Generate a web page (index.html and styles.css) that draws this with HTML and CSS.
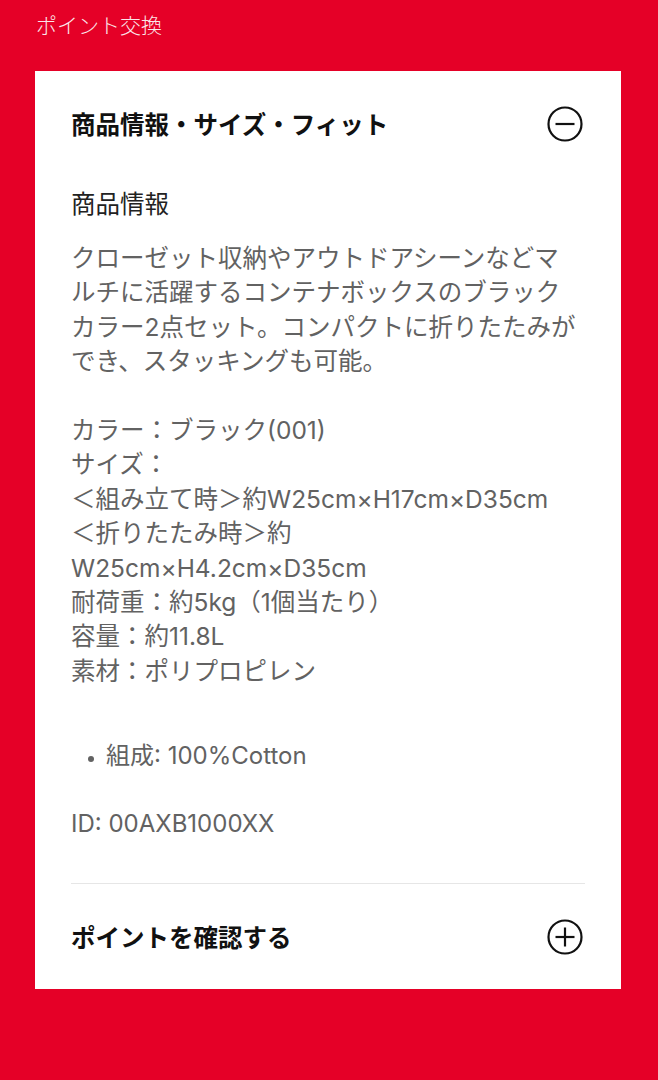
FILE: index.html
```html
<!DOCTYPE html>
<html lang="ja">
<head>
<meta charset="utf-8">
<link rel="stylesheet" href="styles.css">
</head>
<body>
<div class="page">
  <div class="topbar">ポイント交換</div>
  <div class="card">
    <div class="acc-head">
      <h2 class="acc-title">商品情報・サイズ・フィット</h2>
      <svg class="acc-icon" viewBox="0 0 36 36" width="36" height="36"><circle cx="18" cy="18" r="16.5" fill="none" stroke="#111" stroke-width="2.2"/><line x1="8.5" y1="18" x2="27.5" y2="18" stroke="#111" stroke-width="2.2"/></svg>
    </div>
    <div class="acc-body">
      <h3 class="sub">商品情報</h3>
      <p class="desc">クローゼット収納やアウトドアシーンなどマルチに活躍するコンテナボックスのブラックカラー2点セット。コンパクトに折りたたみができ、スタッキングも可能。<br><br>カラー：ブラック(001)<br>サイズ：<br>＜組み立て時＞約W25cm×H17cm×D35cm<br>＜折りたたみ時＞約<br>W25cm×H4.2cm×D35cm<br>耐荷重：約5kg（1個当たり）<br>容量：約11.8L<br>素材：ポリプロピレン</p>
      <ul class="spec">
        <li>組成: 100%Cotton</li>
      </ul>
      <p class="pid">ID: 00AXB1000XX</p>
    </div>
    <div class="acc-head acc-bordered">
      <h2 class="acc-title">ポイントを確認する</h2>
      <svg class="acc-icon" viewBox="0 0 36 36" width="36" height="36"><circle cx="18" cy="18" r="16.5" fill="none" stroke="#111" stroke-width="2.2"/><line x1="8.5" y1="18" x2="27.5" y2="18" stroke="#111" stroke-width="2.2"/><line x1="18" y1="8.5" x2="18" y2="27.5" stroke="#111" stroke-width="2.2"/></svg>
    </div>
  </div>
</div>
</body>
</html>
```

FILE: styles.css
```css
html, body {
  margin: 0;
  padding: 0;
}
body {
  background: #e50027;
  font-family: Inter, "Noto Sans CJK JP", sans-serif;
  width: 658px;
  height: 1080px;
  overflow: hidden;
}
.page {
  padding: 0 37px 0 35px;
}
.topbar {
  color: #fbe6e9;
  font-size: 21px;
  line-height: 52px;
  height: 71px;
  padding-left: 1px;
  font-weight: 300;
}
.card {
  background: #fff;
  padding: 0 36px;
}
.acc-head {
  display: flex;
  align-items: center;
  justify-content: space-between;
  padding: 35px 0;
}
.acc-bordered {
  border-top: 1px solid #e6e6e6;
  padding-bottom: 34px;
}
.acc-title {
  margin: 0;
  font-family: "Noto Sans CJK JP", sans-serif;
  font-size: 24.5px;
  line-height: 36px;
  font-weight: 700;
  color: #111;
}
.acc-icon {
  display: block;
  margin-right: 2px;
}
.acc-body {
  padding: 9px 0 42px;
}
.sub {
  margin: 0;
  font-size: 24.5px;
  line-height: 36px;
  font-weight: 400;
  color: #222;
}
.desc {
  margin: 19px 0 0;
  max-width: 508px;
  font-size: 24.5px;
  line-height: 34.4px;
  color: #626262;
}
.spec {
  margin: 51px 0 0;
  padding-left: 35px;
  font-size: 24px;
  line-height: 34px;
  color: #626262;
}
.spec li::marker {
  font-size: 18px;
}
.pid {
  margin: 34px 0 0;
  font-size: 24px;
  line-height: 34px;
  color: #626262;
}
```
